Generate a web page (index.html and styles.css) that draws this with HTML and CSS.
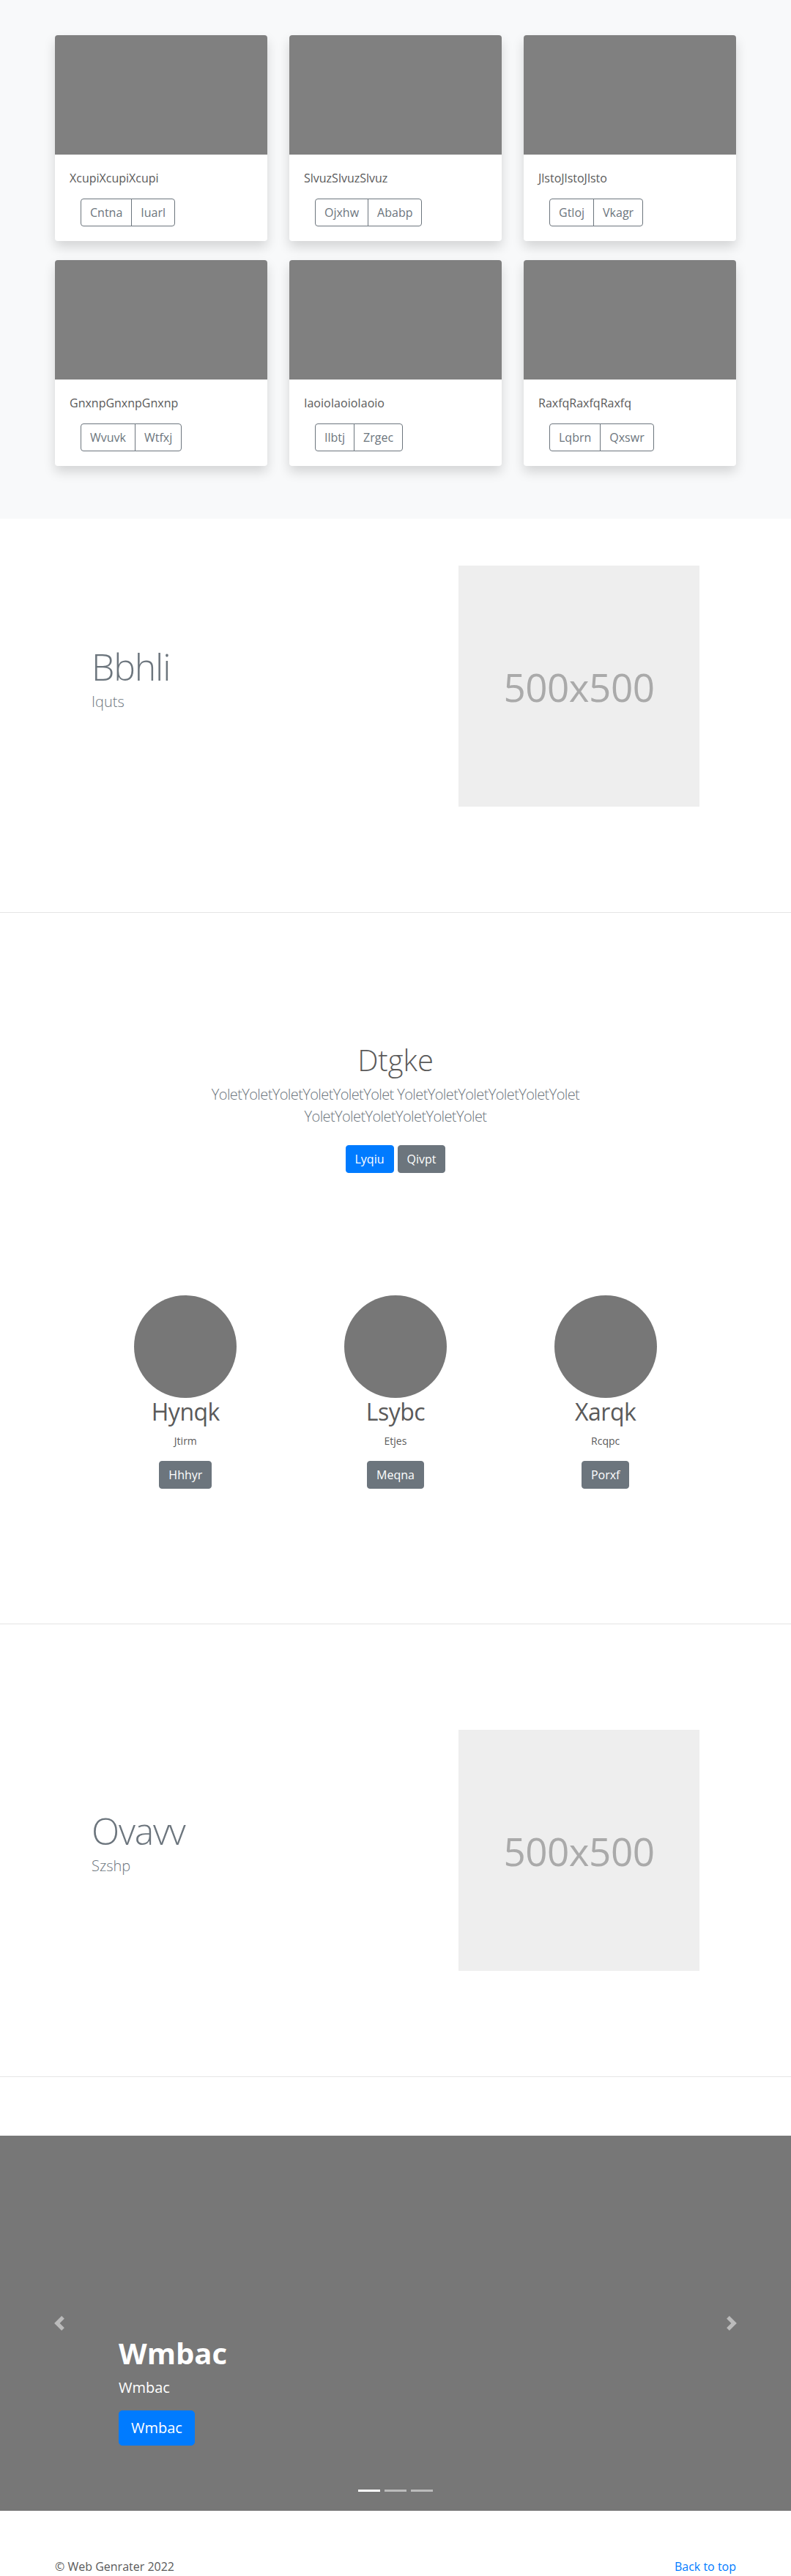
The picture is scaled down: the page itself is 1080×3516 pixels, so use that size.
FILE: index.html
```html
<!DOCTYPE html>
<html lang="en">
<head>
<meta charset="utf-8">
<title>Web Genrater</title>
<link rel="stylesheet" href="styles.css">
</head>
<body>

<section class="album">
  <div class="container">
    <div class="card-grid">
      <div class="card">
        <div class="card-img"></div>
        <div class="card-body">
          <p class="card-text">XcupiXcupiXcupi</p>
          <div class="btn-group"><a class="btn btn-outline">Cntna</a><a class="btn btn-outline">Iuarl</a></div>
        </div>
      </div>
      <div class="card">
        <div class="card-img"></div>
        <div class="card-body">
          <p class="card-text">SlvuzSlvuzSlvuz</p>
          <div class="btn-group"><a class="btn btn-outline">Ojxhw</a><a class="btn btn-outline">Ababp</a></div>
        </div>
      </div>
      <div class="card">
        <div class="card-img"></div>
        <div class="card-body">
          <p class="card-text">JlstoJlstoJlsto</p>
          <div class="btn-group"><a class="btn btn-outline">Gtloj</a><a class="btn btn-outline">Vkagr</a></div>
        </div>
      </div>
      <div class="card">
        <div class="card-img"></div>
        <div class="card-body">
          <p class="card-text">GnxnpGnxnpGnxnp</p>
          <div class="btn-group"><a class="btn btn-outline">Wvuvk</a><a class="btn btn-outline">Wtfxj</a></div>
        </div>
      </div>
      <div class="card">
        <div class="card-img"></div>
        <div class="card-body">
          <p class="card-text">IaoioIaoioIaoio</p>
          <div class="btn-group"><a class="btn btn-outline">Ilbtj</a><a class="btn btn-outline">Zrgec</a></div>
        </div>
      </div>
      <div class="card">
        <div class="card-img"></div>
        <div class="card-body">
          <p class="card-text">RaxfqRaxfqRaxfq</p>
          <div class="btn-group"><a class="btn btn-outline">Lqbrn</a><a class="btn btn-outline">Qxswr</a></div>
        </div>
      </div>
    </div>
  </div>
</section>

<section class="featurette">
  <div class="narrow">
    <div class="featurette-row">
      <div class="featurette-text">
        <h2 class="featurette-heading">Bbhli</h2>
        <p class="lead muted">Iquts</p>
      </div>
      <div class="placeholder">500x500</div>
    </div>
  </div>
</section>

<hr class="divider">

<section class="intro">
  <div class="intro-inner">
    <h1 class="intro-heading">Dtgke</h1>
    <p class="lead muted intro-lead">YoletYoletYoletYoletYoletYolet YoletYoletYoletYoletYoletYolet YoletYoletYoletYoletYoletYolet</p>
    <div class="intro-actions"><a class="btn btn-primary">Lyqiu</a><a class="btn btn-secondary">Qivpt</a></div>
  </div>
  <div class="marketing">
    <div class="marketing-col">
      <div class="circle"></div>
      <h2 class="marketing-name">Hynqk</h2>
      <p class="marketing-role"><small>Jtirm</small></p>
      <a class="btn btn-secondary">Hhhyr</a>
    </div>
    <div class="marketing-col">
      <div class="circle"></div>
      <h2 class="marketing-name">Lsybc</h2>
      <p class="marketing-role"><small>Etjes</small></p>
      <a class="btn btn-secondary">Meqna</a>
    </div>
    <div class="marketing-col">
      <div class="circle"></div>
      <h2 class="marketing-name">Xarqk</h2>
      <p class="marketing-role"><small>Rcqpc</small></p>
      <a class="btn btn-secondary">Porxf</a>
    </div>
  </div>
</section>

<hr class="divider">

<section class="featurette">
  <div class="narrow">
    <div class="featurette-row">
      <div class="featurette-text">
        <h2 class="featurette-heading">Ovavv</h2>
        <p class="lead muted">Szshp</p>
      </div>
      <div class="placeholder">500x500</div>
    </div>
  </div>
</section>

<hr class="divider">

<section class="carousel">
  <a class="carousel-control prev" aria-label="Previous">
    <svg class="carousel-icon" viewBox="0 0 8 8" width="20" height="20"><path d="M5.25 0l-4 4 4 4 1.5-1.5L4.25 4l2.5-2.5L5.25 0z" fill="#fff"/></svg>
  </a>
  <div class="carousel-caption">
    <h1 class="caption-title">Wmbac</h1>
    <p class="caption-text">Wmbac</p>
    <p class="caption-action"><a class="btn btn-primary btn-lg">Wmbac</a></p>
  </div>
  <a class="carousel-control next" aria-label="Next">
    <svg class="carousel-icon" viewBox="0 0 8 8" width="20" height="20"><path d="M2.75 0l-1.5 1.5L3.75 4l-2.5 2.5L2.75 8l4-4-4-4z" fill="#fff"/></svg>
  </a>
  <ol class="carousel-indicators">
    <li class="active"></li>
    <li></li>
    <li></li>
  </ol>
</section>

<footer class="footer">
  <p class="copyright">© Web Genrater 2022</p>
  <p><a class="back-top" href="#">Back to top</a></p>
</footer>

</body>
</html>
```

FILE: styles.css
```css
* { box-sizing: border-box; }

body {
  margin: 0;
  font-family: "Segoe UI", "Open Sans", "Noto Sans", sans-serif;
  font-size: 16px;
  line-height: 1.5;
  color: #5a5a5a;
  background: #fff;
}

/* ---------- album ---------- */
.album {
  background: #f8f9fa;
  padding: 48px 0 72px;
}
.container {
  width: 930px;
  margin: 0 auto;
}
.card-grid {
  display: grid;
  grid-template-columns: repeat(3, 1fr);
  column-gap: 30px;
  row-gap: 26px;
}
.card {
  background: #fff;
  border-radius: 4px;
  overflow: hidden;
  box-shadow: 0 8px 16px rgba(0, 0, 0, 0.15);
}
.card-img {
  height: 163px;
  background: #808080;
}
.card-body {
  padding: 20px;
}
.card-text {
  margin: 0 0 16px;
  color: #5a5a5a;
}

/* ---------- buttons ---------- */
.btn {
  display: inline-block;
  padding: 6px 12px;
  font-size: 16px;
  line-height: 24px;
  font-weight: 400;
  border: 1px solid transparent;
  border-radius: 4px;
  text-decoration: none;
  white-space: nowrap;
  cursor: pointer;
}
.btn-outline {
  color: #6c757d;
  border-color: #6c757d;
  background: transparent;
}
.btn-primary {
  color: #fff;
  background: #007bff;
  border-color: #007bff;
}
.btn-secondary {
  color: #fff;
  background: #6c757d;
  border-color: #6c757d;
}
.btn-lg {
  padding: 8px 16px;
  font-size: 20px;
  line-height: 30px;
  border-radius: 5px;
}
.btn-group {
  display: inline-flex;
  margin-left: 15px;
}
.btn-group .btn:first-child {
  border-top-right-radius: 0;
  border-bottom-right-radius: 0;
}
.btn-group .btn + .btn {
  margin-left: -1px;
  border-top-left-radius: 0;
  border-bottom-left-radius: 0;
}

/* ---------- featurette ---------- */
.narrow {
  width: 830px;
  margin: 0 auto;
}
.featurette {
  padding: 64px 0;
}
.featurette-row {
  display: flex;
  align-items: center;
}
.featurette-text {
  flex: 1;
}
.featurette-heading {
  margin: 0 0 8px;
  font-size: 50px;
  font-weight: 300;
  line-height: 1;
  letter-spacing: -1.2px;
  color: #6c757d;
}
.lead {
  margin: 0 0 16px;
  font-size: 20px;
  font-weight: 300;
  line-height: 30px;
}
.muted {
  color: #6c757d;
}
.placeholder {
  width: 329px;
  height: 329px;
  background: #eee;
  color: #aaa;
  font-size: 53px;
  letter-spacing: -0.5px;
  display: flex;
  align-items: center;
  justify-content: center;
  padding-top: 2px;
}

.divider {
  margin: 80px 0;
  height: 0;
  border: 0;
  border-top: 1px solid rgba(0, 0, 0, 0.1);
}

/* ---------- intro + marketing ---------- */
.intro {
  padding: 97px 0 104px;
  text-align: center;
}
.intro-inner {
  width: 560px;
  margin: 0 auto;
}
.intro-heading {
  margin: 0 0 8px;
  font-size: 40px;
  font-weight: 300;
  line-height: 1.2;
  color: #5a5a5a;
}
.intro-lead {
  letter-spacing: -0.6px;
}
.intro-actions {
  display: flex;
  justify-content: center;
  gap: 5px;
  margin-top: 24px;
}
.marketing {
  width: 860px;
  margin: 167px auto 0;
  display: grid;
  grid-template-columns: repeat(3, 1fr);
}
.marketing-col {
  display: flex;
  flex-direction: column;
  align-items: center;
}
.circle {
  width: 140px;
  height: 140px;
  border-radius: 50%;
  background: #777;
}
.marketing-name {
  margin: 0 0 8px;
  font-size: 32px;
  font-weight: 400;
  line-height: 1.2;
  letter-spacing: -0.5px;
  color: #5a5a5a;
}
.marketing-role {
  margin: 0 0 16px;
}
.marketing-role small {
  font-size: 14px;
}

/* ---------- carousel ---------- */
.carousel {
  position: relative;
  height: 512px;
  background: #777;
}
.carousel-control {
  position: absolute;
  top: 0;
  bottom: 0;
  width: 15%;
  display: flex;
  align-items: center;
  justify-content: center;
  opacity: 0.5;
}
.carousel-control.prev { left: 0; }
.carousel-control.next { right: 0; }
.carousel-icon {
  display: block;
}
.carousel-caption {
  position: absolute;
  left: 15%;
  right: 15%;
  bottom: 89px;
  color: #fff;
  text-align: left;
}
.caption-title {
  margin: 0 0 8px;
  font-size: 40px;
  font-weight: 700;
  line-height: 1.2;
}
.caption-text {
  margin: 0 0 16px;
  font-size: 20px;
  line-height: 30px;
}
.caption-action {
  margin: 0;
}
.carousel-indicators {
  position: absolute;
  left: 0;
  right: 0;
  bottom: 26px;
  margin: 0;
  padding: 0;
  list-style: none;
  display: flex;
  justify-content: center;
}
.carousel-indicators li {
  width: 30px;
  height: 3px;
  margin: 0 3px;
  background: rgba(255, 255, 255, 0.5);
}
.carousel-indicators li.active {
  background: #fff;
}

/* ---------- footer ---------- */
.footer {
  width: 930px;
  margin: 0 auto;
  padding-top: 64px;
  display: flex;
  justify-content: space-between;
}
.footer p {
  margin: 0;
}
.back-top {
  color: #007bff;
  text-decoration: none;
}
```
